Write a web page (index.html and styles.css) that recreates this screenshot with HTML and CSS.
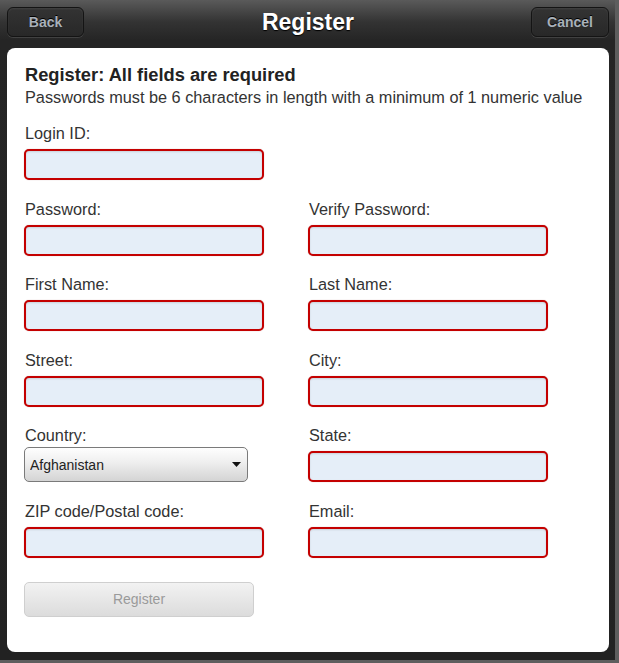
FILE: index.html
```html
<!DOCTYPE html>
<html lang="en">
<head>
<meta charset="utf-8">
<title>Register</title>
<link rel="stylesheet" href="styles.css">
</head>
<body>
<div class="frame">
  <header class="topbar">
    <button class="nav-btn back">Back</button>
    <h1 class="title">Register</h1>
    <button class="nav-btn cancel">Cancel</button>
  </header>
  <main class="panel">
    <div class="intro">
      <h2 class="heading">Register: All fields are required</h2>
      <p class="note">Passwords must be 6 characters in length with a minimum of 1 numeric value</p>
    </div>
    <form class="form-grid">
      <div class="field">
        <label class="label">Login ID:</label>
        <input class="text-input" type="text">
      </div>
      <div class="field field-empty"></div>

      <div class="field">
        <label class="label">Password:</label>
        <input class="text-input" type="password">
      </div>
      <div class="field">
        <label class="label">Verify Password:</label>
        <input class="text-input" type="password">
      </div>

      <div class="field">
        <label class="label">First Name:</label>
        <input class="text-input" type="text">
      </div>
      <div class="field">
        <label class="label">Last Name:</label>
        <input class="text-input" type="text">
      </div>

      <div class="field">
        <label class="label">Street:</label>
        <input class="text-input" type="text">
      </div>
      <div class="field">
        <label class="label">City:</label>
        <input class="text-input" type="text">
      </div>

      <div class="field">
        <label class="label">Country:</label>
        <div class="select-wrap">
          <select class="select">
            <option>Afghanistan</option>
          </select>
          <svg class="select-arrow" width="9" height="5" viewBox="0 0 9 5"><path d="M0 0 H9 L4.5 5 Z" fill="#111"/></svg>
        </div>
      </div>
      <div class="field">
        <label class="label">State:</label>
        <input class="text-input" type="text">
      </div>

      <div class="field">
        <label class="label">ZIP code/Postal code:</label>
        <input class="text-input" type="text">
      </div>
      <div class="field">
        <label class="label">Email:</label>
        <input class="text-input" type="text">
      </div>
    </form>
    <button class="submit-btn" type="button">Register</button>
  </main>
</div>
</body>
</html>
```

FILE: styles.css
```css
* { box-sizing: border-box; }

html, body {
  margin: 0;
  padding: 0;
}

body {
  background: #5e5e5e;
  width: 619px;
  height: 663px;
  overflow: hidden;
  font-family: "Liberation Sans", Arial, sans-serif;
}

.frame {
  width: 615px;
  height: 660px;
  display: flex;
  flex-direction: column;
  background: linear-gradient(#5a5a5a 0px, #333 22px, #252525 40px, #222 100%);
}

.topbar {
  height: 48px;
  flex: none;
  display: grid;
  grid-template-columns: 1fr auto 1fr;
  align-items: start;
  padding: 7px 6px 0 7px;
}

.nav-btn {
  height: 30px;
  padding: 0;
  border: 1px solid #141414;
  border-radius: 6px;
  background: linear-gradient(#333, #282828);
  box-shadow: inset 0 1px 2px rgba(255,255,255,0.08), 0 1px 0 rgba(255,255,255,0.12);
  color: #a9b1ba;
  font-family: "Liberation Sans", Arial, sans-serif;
  font-weight: bold;
  font-size: 14px;
  line-height: 28px;
  text-shadow: 0 -1px 0 #000;
}

.back {
  width: 77px;
  justify-self: start;
}

.cancel {
  width: 78px;
  justify-self: end;
}

.title {
  margin: 0;
  height: 30px;
  line-height: 31px;
  color: #fff;
  font-size: 23px;
  font-weight: bold;
  text-shadow: 0 1px 1px #000;
}

.panel {
  flex: 1;
  margin: 0 6px 8px 7px;
  background: #fff;
  border-radius: 8px;
  padding: 17px 0 0 17px;
}

.intro {
  margin-bottom: 17px;
  padding-left: 1px;
}

.heading {
  margin: 0;
  font-size: 18.3px;
  line-height: 20px;
  font-weight: bold;
  color: #222;
}

.note {
  margin: 2px 0 0;
  font-size: 16.3px;
  line-height: 20px;
  color: #333;
}

.form-grid {
  display: grid;
  grid-template-columns: 240px 240px;
  column-gap: 44px;
  row-gap: 19.6px;
}

.field {
  display: flex;
  flex-direction: column;
}

.label {
  display: block;
  font-size: 16.3px;
  line-height: 18px;
  color: #333;
  margin-bottom: 7px;
  padding-left: 1px;
}

.text-input {
  display: block;
  width: 240px;
  height: 31px;
  margin: 0;
  border: 2px solid #c40000;
  border-radius: 5px;
  background: #e5eef8;
  box-shadow: inset 0 1px 2px rgba(0,0,0,0.12), 0 0 1px rgba(120,0,0,0.4);
  outline: none;
}

.select-wrap {
  position: relative;
  width: 224px;
  height: 35px;
  margin-top: -4px;
}

.select {
  appearance: none;
  -webkit-appearance: none;
  width: 224px;
  height: 35px;
  margin: 0;
  padding: 0 0 0 5px;
  border: 1px solid #7a7a7a;
  border-radius: 5px;
  background: linear-gradient(#fefefe, #f0f0f0 40%, #d4d4d4);
  font-family: "Liberation Sans", Arial, sans-serif;
  font-size: 14px;
  color: #222;
}

.select-arrow {
  position: absolute;
  left: 208px;
  top: 15px;
}

.submit-btn {
  display: block;
  margin-top: 24px;
  width: 230px;
  height: 35px;
  border: 1px solid #cfcfcf;
  border-radius: 5px;
  background: linear-gradient(#f2f2f2, #dcdcdc);
  color: #9a9a9a;
  font-family: "Liberation Sans", Arial, sans-serif;
  font-size: 14px;
  padding: 0;
}
```
